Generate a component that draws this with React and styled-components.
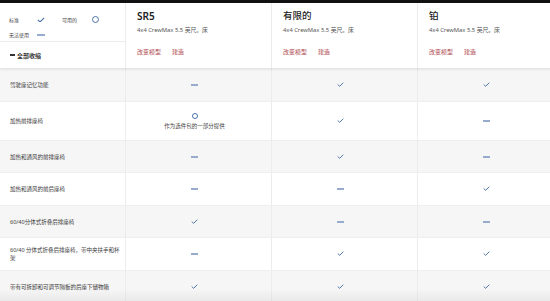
import React from 'react'
import styled, { createGlobalStyle } from 'styled-components'

const GlobalStyle = createGlobalStyle`
  body {
    margin: 0;
    background: #fff;
    font-family: "Noto Sans", "Noto Sans CJK SC", sans-serif;
    color: #333;
  }
`

const Page = styled.div`
  width: 550px;
  height: 301px;
  overflow: hidden;
  position: relative;
  &:after {
    content: '';
    position: absolute;
    left: 0;
    right: 0;
    bottom: 0;
    height: 12px;
    background: linear-gradient(rgba(0,0,0,0), rgba(0,0,0,0.05));
  }
`

const TopBar = styled.div`
  height: 3px;
  background: #111;
`

const Grid = styled.div`
  display: grid;
  grid-template-columns: 126px 146px 146px 146px;
  width: 564px;
  box-sizing: border-box;
`

const Header = styled(Grid)`
  position: relative;
  z-index: 2;
  height: 65px;
  background: #fff;
  box-shadow: 0 2px 2px rgba(0, 0, 0, 0.07);
`

const LeftHead = styled.div`
  display: flex;
  flex-direction: column;
  border-right: 1px solid #ececec;
`

const Legend = styled.div`
  height: 39px;
  box-sizing: border-box;
  padding: 9px 0 0 9px;
  display: grid;
  grid-template-columns: 28px 25px 30px 20px;
  grid-auto-rows: 15px;
  align-items: center;
  font-size: 5px;
  color: #444;
  border-bottom: 1px solid #ececec;
`

const Collapse = styled.div`
  flex: 1;
  display: flex;
  align-items: center;
  gap: 2px;
  padding-left: 10px;
  font-size: 6px;
  font-weight: 600;
  color: #333;
`

const ModelHead = styled.div`
  padding: 6px 0 0 11px;
  border-right: 1px solid #ececec;
`

const Title = styled.div`
  font-size: ${p => (p.latin ? '10px' : '9.5px')};
  font-weight: ${p => (p.latin ? 600 : 500)};
  line-height: 14px;
  color: #222;
`

const Sub = styled.div`
  font-size: 5.8px;
  line-height: 8px;
  margin-top: 3px;
  color: #555;
`

const Links = styled.div`
  display: flex;
  gap: 11px;
  margin-top: 14px;
  font-size: 6px;
  line-height: 8px;
  color: #b04a50;
`

const Row = styled(Grid)`
  background: ${p => (p.shade ? '#f6f6f6' : '#fff')};
  border-bottom: 1px solid #efefef;
  min-height: ${p => p.h}px;
`

const Label = styled.div`
  display: flex;
  align-items: center;
  padding: 0 5px 0 10px;
  font-size: 5.5px;
  line-height: 8px;
  color: #3a3a3a;
  border-right: 1px solid #ececec;
`

const Cell = styled.div`
  display: flex;
  flex-direction: column;
  align-items: center;
  justify-content: center;
  gap: 4px;
  padding-right: 8px;
  border-right: 1px solid #ececec;
`

const Note = styled.div`
  font-size: 5.5px;
  line-height: 7px;
  color: #444;
`

const Dash = styled.span`
  display: block;
  width: ${p => p.w || 7}px;
  height: 2px;
  background: ${p => p.color || '#97accd'};
`

const Circle = styled.span`
  display: block;
  box-sizing: border-box;
  width: ${p => p.size}px;
  height: ${p => p.size}px;
  border: 1.2px solid #4d74a8;
  border-radius: 50%;
`

const Check = ({ w = 7 }) => (
  <svg width={w} height={w * 0.72} viewBox="0 0 10 7.2">
    <polyline points="1,3.6 3.8,6.2 9,1" fill="none" stroke="#4d74a8" strokeWidth="1.4" />
  </svg>
)

const models = [
  { name: 'SR5', latin: true },
  { name: '有限的' },
  { name: '铂' },
]

const rows = [
  ['驾驶座记忆功能', 'dash', 'check', 'check', 34],
  ['加热前排座椅', 'option', 'check', 'dash', 39],
  ['加热和通风的前排座椅', 'dash', 'check', 'dash', 32],
  ['加热和通风的前后座椅', 'dash', 'dash', 'check', 33],
  ['60/40分体式折叠后排座椅', 'check', 'dash', 'dash', 32],
  ['60/40 分体式折叠后排座椅，带中央扶手和杯架', 'dash', 'check', 'check', 33],
  ['带有可拆卸和可调节隔板的后座下储物箱', 'check', 'check', 'check', 32],
]

const Mark = ({ kind }) => {
  if (kind === 'check') return <Check />
  if (kind === 'dash') return <Dash />
  return (
    <>
      <Circle size={6} />
      <Note>作为选件包的一部分提供</Note>
    </>
  )
}

const App = () => {
  return (
    <Page>
      <GlobalStyle />
      <TopBar />
      <Header>
        <LeftHead>
          <Legend>
            <span>标准</span>
            <Check w={8} />
            <span>可用的</span>
            <Circle size={7} />
            <span>无法使用</span>
            <Dash w={8} />
          </Legend>
          <Collapse>
            <Dash w={5} color="#333" />
            全部收缩
          </Collapse>
        </LeftHead>
        {models.map(m => (
          <ModelHead key={m.name}>
            <Title latin={m.latin}>{m.name}</Title>
            <Sub>4x4 CrewMax 5.5 英尺。床</Sub>
            <Links>
              <span>改变模型</span>
              <span>建造</span>
            </Links>
          </ModelHead>
        ))}
      </Header>
      {rows.map((r, i) => (
        <Row key={r[0]} shade={i % 2 === 0} h={r[4]}>
          <Label>{r[0]}</Label>
          <Cell><Mark kind={r[1]} /></Cell>
          <Cell><Mark kind={r[2]} /></Cell>
          <Cell><Mark kind={r[3]} /></Cell>
        </Row>
      ))}
    </Page>
  )
}

export default App
